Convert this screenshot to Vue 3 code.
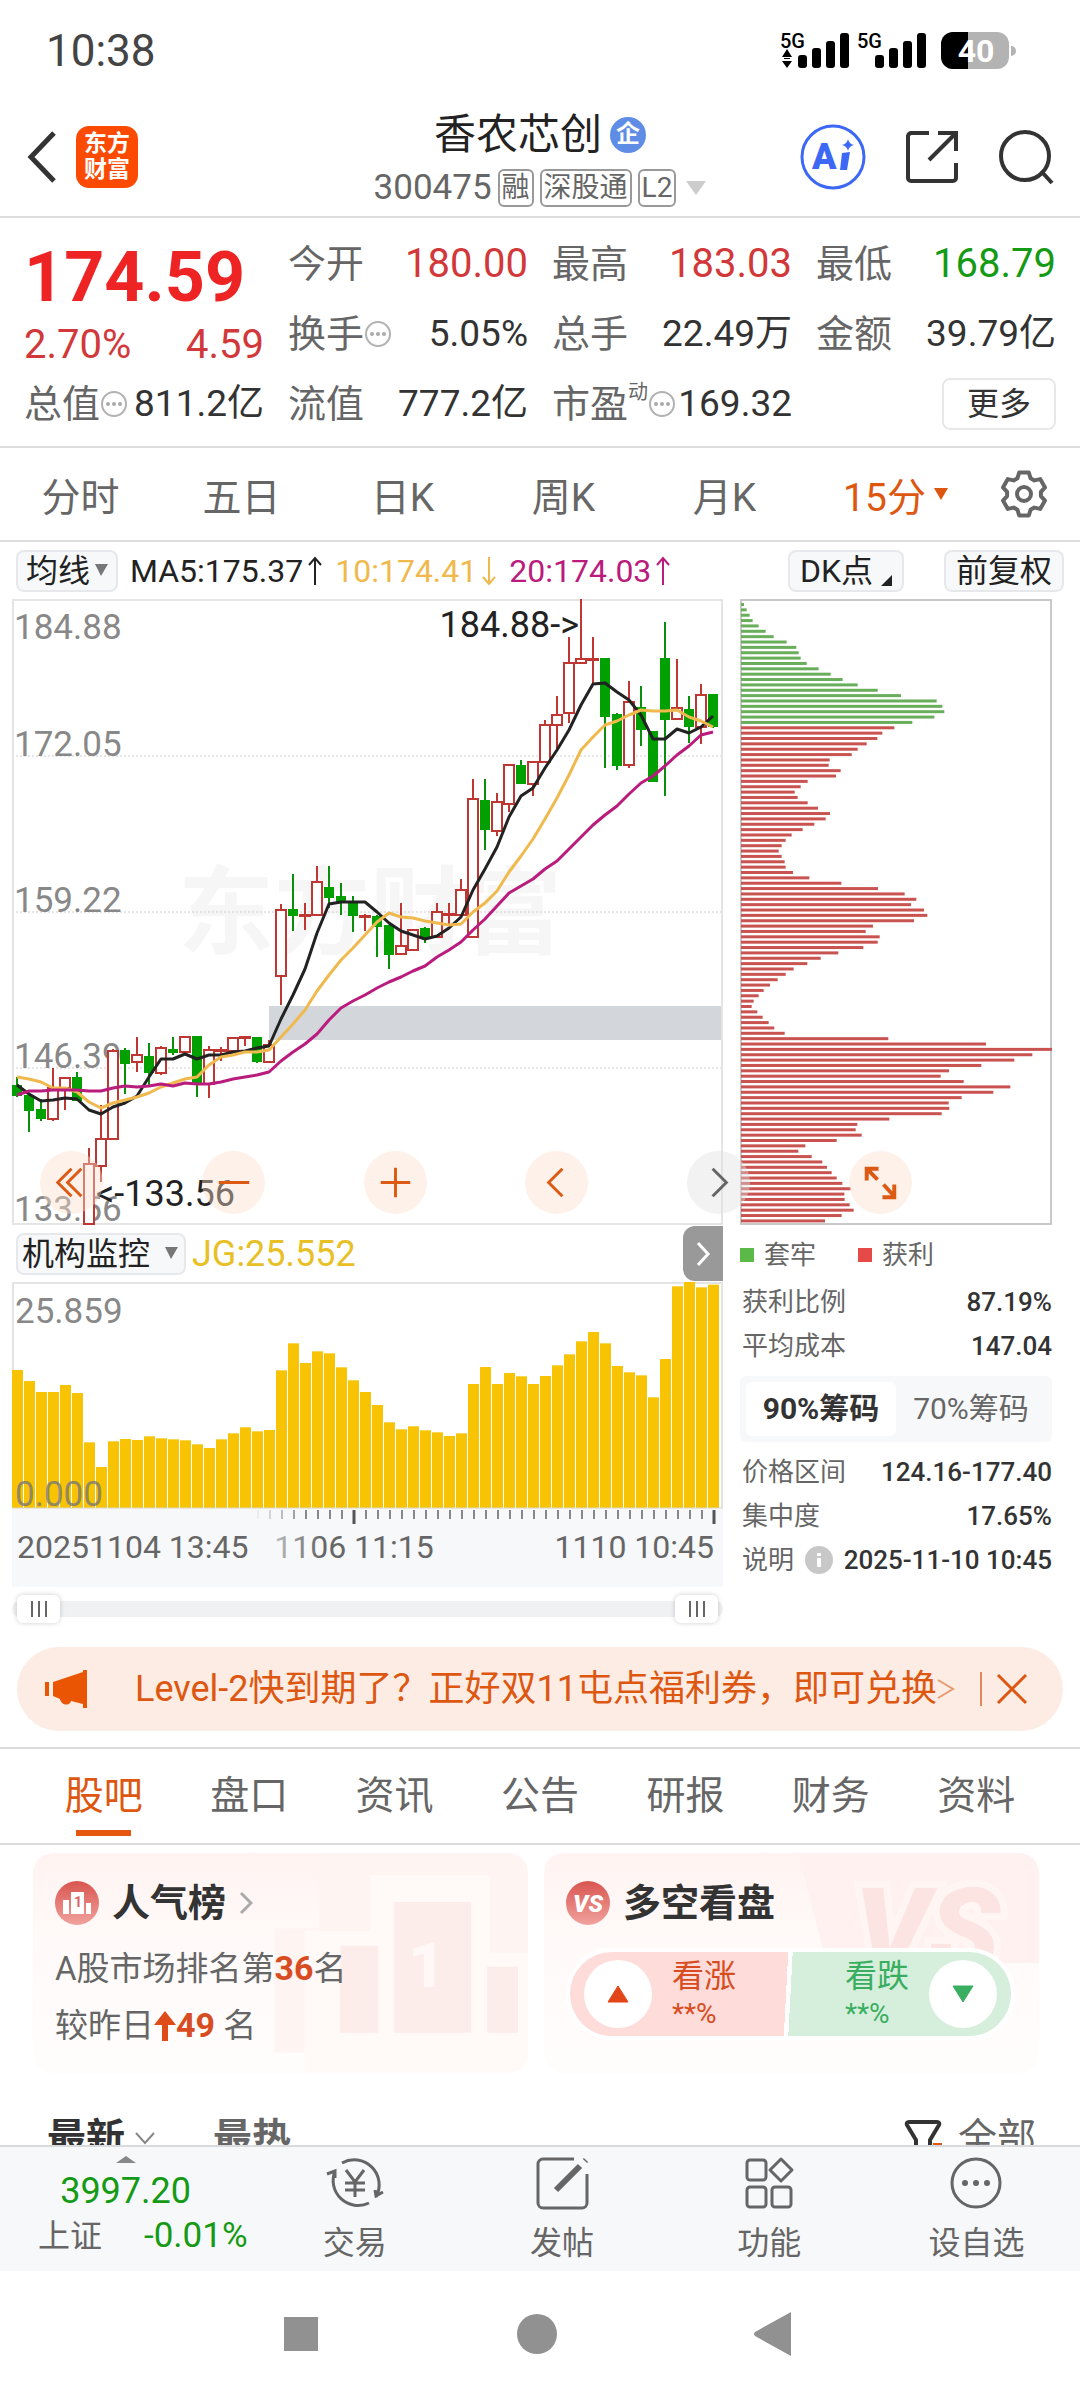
<script setup>
import { ref } from 'vue'

/* K-line samples: [direction, high, body top, body bottom, low].
   Heights are kept in plot units, 2.45 per pixel, starting at 23. */
const candles = [
  ['d', 1193, 1215, 1238, 1243], ['d', 1240, 1240, 1276, 1330], ['d', 1247, 1276, 1295, 1302],
  ['u', 1171, 1220, 1298, 1302], ['u', 1195, 1196, 1222, 1275], ['d', 1183, 1196, 1250, 1252],
  ['u', 1368, 1408, 1554, 1554], ['u', 1262, 1347, 1411, 1452], ['u', 1125, 1131, 1345, 1345],
  ['d', 1122, 1130, 1159, 1235], ['u', 1095, 1141, 1158, 1182], ['d', 1111, 1144, 1182, 1214],
  ['u', 1118, 1124, 1184, 1190], ['d', 1096, 1129, 1133, 1139], ['u', 1095, 1095, 1132, 1132],
  ['d', 1095, 1096, 1211, 1243], ['u', 1118, 1127, 1212, 1245], ['u', 1120, 1129, 1131, 1154],
  ['u', 1097, 1099, 1130, 1130], ['u', 1096, 1097, 1099, 1118], ['d', 1096, 1098, 1155, 1160],
  ['u', 1103, 1115, 1157, 1157], ['u', 770, 784, 946, 1018], ['d', 696, 784, 798, 836],
  ['u', 768, 797, 799, 835], ['u', 678, 716, 797, 797], ['d', 678, 731, 752, 780],
  ['d', 718, 753, 764, 797], ['d', 750, 765, 796, 839], ['u', 795, 800, 802, 837],
  ['d', 797, 801, 825, 900], ['d', 822, 824, 892, 930], ['u', 768, 872, 892, 892],
  ['u', 833, 835, 884, 884], ['d', 827, 832, 850, 866], ['u', 768, 790, 852, 852],
  ['u', 768, 795, 797, 820], ['u', 708, 735, 796, 796], ['u', 465, 513, 852, 852],
  ['d', 463, 519, 587, 638], ['u', 499, 520, 591, 604], ['u', 428, 429, 525, 546],
  ['d', 418, 431, 474, 477], ['u', 422, 423, 476, 506], ['u', 319, 331, 423, 423],
  ['u', 261, 307, 331, 390], ['u', 115, 181, 303, 328], ['u', 23, 170, 181, 181],
  ['u', 115, 171, 173, 230], ['d', 170, 171, 310, 438], ['d', 302, 306, 429, 442],
  ['u', 225, 275, 430, 438], ['d', 236, 291, 342, 382], ['d', 348, 349, 468, 468],
  ['d', 80, 171, 317, 505], ['u', 171, 291, 317, 320], ['d', 261, 295, 335, 376],
  ['u', 231, 259, 336, 378], ['d', 258, 259, 333, 340],
]
const ma5 = [1213, 1235, 1254, 1250, 1246, 1249, 1274, 1285, 1268, 1259, 1240, 1195, 1150, 1150, 1137, 1149, 1139, 1139, 1133, 1130, 1122, 1117, 1052, 992, 930, 842, 770, 765, 765, 766, 790, 817, 837, 847, 855, 848, 828, 801, 737, 684, 630, 558, 506, 487, 437, 394, 343, 283, 232, 228, 251, 271, 306, 365, 367, 341, 351, 336, 309]
const ma10 = [1194, 1199, 1207, 1220, 1222, 1232, 1255, 1269, 1259, 1251, 1243, 1233, 1218, 1209, 1199, 1193, 1165, 1144, 1139, 1134, 1134, 1128, 1097, 1064, 1031, 983, 945, 908, 878, 847, 815, 793, 801, 805, 811, 818, 822, 820, 790, 769, 738, 693, 653, 611, 561, 511, 453, 394, 361, 332, 323, 307, 295, 298, 297, 296, 311, 321, 336]
const ma20 = [1238, 1229, 1229, 1227, 1226, 1226, 1229, 1229, 1220, 1215, 1218, 1217, 1212, 1215, 1210, 1212, 1212, 1207, 1200, 1194, 1189, 1181, 1156, 1134, 1114, 1088, 1055, 1026, 1009, 992, 975, 961, 948, 934, 921, 900, 882, 863, 835, 808, 776, 743, 727, 708, 685, 664, 636, 605, 576, 552, 530, 501, 474, 456, 431, 405, 382, 357, 348]

const px = (i) => 5 + i * 12
const py = (v) => Math.round((v - 23) / 2.45)
const line = (values) => values.map((v, i) => `${px(i)},${py(v)}`).join(' ')

const axis = [['184.88', 40], ['172.05', 157], ['159.22', 313], ['146.39', 469], ['133.56', 622]]

/* Chip distribution, longest bar = 934 */
const trapped = [9, 17, 26, 35, 53, 74, 98, 137, 166, 173, 179, 197, 233, 269, 305, 350, 410, 480, 587, 604, 610, 580, 514]
const profit = [460, 424, 409, 377, 350, 332, 266, 263, 299, 285, 200, 179, 161, 170, 200, 231, 267, 254, 220, 185, 152, 134, 122, 113, 122, 131, 134, 156, 205, 301, 411, 491, 526, 510, 549, 559, 519, 396, 374, 416, 410, 367, 292, 239, 199, 158, 134, 110, 87, 68, 53, 38, 32, 49, 65, 83, 100, 131, 442, 735, 934, 874, 820, 721, 624, 599, 668, 808, 757, 662, 623, 625, 602, 445, 349, 344, 362, 287, 193, 172, 212, 244, 258, 272, 287, 304, 329, 310, 311, 326, 338, 302, 252]
const chips = [...trapped, ...profit].map((v, i) => ({
  y: 6 + i * 5.36,
  w: v / 3,
  color: i < trapped.length ? '#69ae5b' : '#c95350',
}))

/* Institution monitor, measured down from the top of the pane (678 = zero) */
const jg = [264, 297, 330, 330, 309, 333, 481, 555, 478, 471, 474, 463, 469, 472, 475, 487, 498, 472, 454, 436, 448, 444, 265, 184, 243, 208, 214, 256, 295, 330, 369, 421, 442, 433, 445, 451, 462, 454, 306, 255, 306, 273, 283, 306, 282, 250, 217, 178, 150, 184, 252, 271, 280, 346, 231, 13, 0, 16, 8]

const ticks = Array.from({ length: 39 }, (_, i) => ({
  x: 246 + i * 12,
  major: i === 8 || i === 38,
  opacity: Math.min(1, 0.1 + i * 0.22),
}))

const gear = (() => {
  const pts = []
  for (let i = 0; i < 6; i++) {
    const a = (i * 60 - 90) * Math.PI / 180
    for (const [r, d] of [[17, -0.4], [22, -0.22], [22, 0.22], [17, 0.4]]) {
      pts.push(`${(25 + r * Math.cos(a + d)).toFixed(1)},${(25 + r * Math.sin(a + d)).toFixed(1)}`)
    }
  }
  return pts.join(' ')
})()

const periods = ['分时', '五日', '日K', '周K', '月K']
const sections = ['股吧', '盘口', '资讯', '公告', '研报', '财务', '资料']
const quotes = [
  { k: '今开', v: '180.00', c: 'red' },
  { k: '最高', v: '183.03', c: 'red' },
  { k: '最低', v: '168.79', c: 'green' },
  { k: '换手', v: '5.05%', tip: true },
  { k: '总手', v: '22.49万' },
  { k: '金额', v: '39.79亿' },
  { k: '总值', v: '811.2亿', tip: true },
  { k: '流值', v: '777.2亿' },
  { k: '市盈', v: '169.32', tip: true, sup: '动' },
]
const rangeStart = ref(0)
const rangeEnd = ref(100)
</script>

<template>
  <div class="app">
    <div class="status">
      <span class="clock">10:38</span>
      <svg class="signals" width="240" height="44" viewBox="0 0 240 44" aria-label="5G 5G 40%">
        <g fill="#000">
          <text x="0" y="19" font-size="20" font-weight="500" class="sig">5G</text>
          <text x="77" y="19" font-size="20" font-weight="500" class="sig">5G</text>
          <path d="M2 28l5-8 5 8zM2 32l5 7 5-7zM4 29h6v1H4z" />
          <rect x="18" y="26" width="9" height="13" rx="3" /><rect x="32" y="19" width="9" height="20" rx="3" />
          <rect x="46" y="12" width="9" height="27" rx="3" /><rect x="60" y="4" width="9" height="35" rx="3" />
          <rect x="95" y="26" width="9" height="13" rx="3" /><rect x="109" y="19" width="9" height="20" rx="3" />
          <rect x="123" y="12" width="9" height="27" rx="3" /><rect x="137" y="4" width="9" height="35" rx="3" />
        </g>
        <rect x="161" y="3" width="68" height="37" rx="12" fill="#b3b3b3" />
        <path d="M188 3h-15a12 12 0 0 0-12 12v13a12 12 0 0 0 12 12h15z" fill="#000" />
        <path d="M231 17a5 5 0 0 1 0 10z" fill="#b3b3b3" />
        <text x="196" y="33" text-anchor="middle" font-size="32" font-weight="700" fill="#fff" class="sig">40</text>
      </svg>
    </div>

    <header class="top">
      <button class="back" aria-label="返回">
        <svg width="32" height="56" viewBox="0 0 32 56" fill="none" stroke="#333" stroke-width="5"><path d="M28 4L5 28l23 24" /></svg>
      </button>
      <a class="logo" href="#">东方<br>财富</a>
      <div class="name">
        <h1>香农芯创<span class="qi">企</span></h1>
        <button class="code">300475<span class="tag">融</span><span class="tag">深股通</span><span class="tag">L2</span>
          <svg width="20" height="14" viewBox="0 0 20 14"><path d="M0 0h20L10 14z" fill="#ccc" /></svg>
        </button>
      </div>
      <div class="actions">
        <button aria-label="Ai">
          <svg width="66" height="66" viewBox="0 0 66 66">
            <circle cx="33" cy="33" r="31" fill="#fff" stroke="#3d68f6" stroke-width="3" />
            <text x="12" y="45" font-size="36" font-weight="900" fill="#3d68f6" class="sig">A</text>
            <path d="M42 29l8-1-3 18h-7z" fill="#3d68f6" /><path d="M48 15q1 5 6 6-5 1-6 6-1-5-6-6 5-1 6-6z" fill="#3d68f6" />
          </svg>
        </button>
        <button aria-label="分享">
          <svg width="56" height="56" viewBox="0 0 56 56" fill="none" stroke="#333" stroke-width="4">
            <path d="M25 4H7a4 4 0 0 0-3 3v42a3 3 0 0 0 3 3h42a3 3 0 0 0 3-3V34M34 4h18v18M52 4L25 31" />
          </svg>
        </button>
        <button aria-label="搜索">
          <svg width="56" height="56" viewBox="0 0 56 56" fill="none" stroke="#333" stroke-width="4"><circle cx="27" cy="27" r="24" /><path d="M43 42l11 12" /></svg>
        </button>
      </div>
    </header>

    <section class="quote">
      <div class="last">
        <div class="price">174.59</div>
        <div class="change"><span>2.70%</span><span>4.59</span></div>
      </div>
      <div v-for="q in quotes" :key="q.k" class="cell">
        <span class="k">{{ q.k }}<sup v-if="q.sup">{{ q.sup }}</sup></span>
        <svg v-if="q.tip" class="tip" width="28" height="28" viewBox="0 0 28 28">
          <circle cx="14" cy="14" r="12" fill="none" stroke="#b2b2b2" stroke-width="2" />
          <g fill="#aaa"><circle cx="8" cy="14" r="2" /><circle cx="14" cy="14" r="2" /><circle cx="20" cy="14" r="2" /></g>
        </svg>
        <span class="v" :class="q.c">{{ q.v }}</span>
      </div>
      <div class="cell"><button class="more">更多</button></div>
    </section>

    <nav class="periods">
      <button v-for="p in periods" :key="p">{{ p }}</button>
      <button class="on">15分<svg width="14" height="14" viewBox="0 0 14 14"><path d="M0 1h14L7 13z" fill="#dd5711" /></svg></button>
      <button aria-label="设置">
        <svg width="50" height="50" viewBox="0 0 50 50" fill="none" stroke="#666" stroke-width="4" stroke-linejoin="round"><polygon :points="gear" /><circle cx="25" cy="25" r="7" /></svg>
      </button>
    </nav>

    <div class="indicators">
      <label class="pick">
        <select aria-label="主图指标"><option>均线</option></select>
        <svg width="13" height="13" viewBox="0 0 13 13"><path d="M0 0h13L6 12z" fill="#777" /></svg>
      </label>
      <span class="ma m5">MA5:175.37<svg width="16" height="30" viewBox="0 0 16 30"><path d="M8 29V2M2 9l6-7 6 7" /></svg></span>
      <span class="ma m10">10:174.41<svg width="16" height="30" viewBox="0 0 16 30"><path d="M8 1v27M2 21l6 7 6-7" /></svg></span>
      <span class="ma m20">20:174.03<svg width="16" height="30" viewBox="0 0 16 30"><path d="M8 29V2M2 9l6-7 6 7" /></svg></span>
      <button class="chipbtn dk">DK点<svg width="11" height="11" viewBox="0 0 11 11"><path d="M11 0v11H0z" fill="#222" /></svg></button>
      <button class="chipbtn">前复权</button>
    </div>

    <section class="charts">
      <svg class="kline" viewBox="0 0 711 626">
        <text x="358" y="347" text-anchor="middle" font-size="96" font-weight="700" fill="#f6f6f6">东方财富</text>
        <rect x="257" y="407" width="454" height="34" fill="#d3d7dc" />
        <g stroke="#ccc" stroke-dasharray="2 2"><path d="M0 157h711M0 313h711M0 469h711" /></g>
        <rect x="1" y="1" width="709" height="624" fill="none" stroke="#e4e4e4" stroke-width="2" />
        <g fill="#888" font-size="35"><text v-for="a in axis" :key="a[0]" x="2" :y="a[1]">{{ a[0] }}</text></g>
        <g v-for="(c, i) in candles" :key="i" stroke-width="2" :stroke="c[0] === 'u' ? '#bf3733' : '#0a8f0a'">
          <path :d="`M${px(i)} ${py(c[1])}V${py(c[2])}M${px(i)} ${py(c[3])}V${py(c[4])}`" />
          <rect :x="px(i) - (c[0] === 'u' ? 5 : 4)" :y="py(c[2])" :width="c[0] === 'u' ? 10 : 8" :height="Math.max(py(c[3]) - py(c[2]), 1)" :fill="c[0] === 'u' ? '#fff' : '#00a000'" :stroke="c[0] === 'u' ? '#bf3733' : '#00a000'" />
        </g>
        <g fill="none" stroke-width="3" stroke-linejoin="round">
          <polyline :points="line(ma5)" stroke="#222" />
          <polyline :points="line(ma10)" stroke="#f0b94e" />
          <polyline :points="line(ma20)" stroke="#b91c7c" />
        </g>
        <g fill="#222" font-size="36">
          <text x="567" y="38" text-anchor="end">184.88-&gt;</text>
          <text x="84" y="607">&lt;-133.56</text>
        </g>
      </svg>
      <svg class="pyramid" viewBox="0 0 312 626">
        <rect x="1" y="1" width="310" height="624" fill="none" stroke="#c9c9c9" stroke-width="2" />
        <rect v-for="(c, i) in chips" :key="i" x="1" :y="c.y - 2" :width="c.w" height="3" :fill="c.color" />
      </svg>
      <div class="controls">
        <button aria-label="最左"><svg viewBox="0 0 64 64"><path d="M32 18L18 32l14 14M42 18L28 32l14 14" /></svg></button>
        <button aria-label="缩小"><svg viewBox="0 0 64 64"><path d="M17 32h31" /></svg></button>
        <button aria-label="放大"><svg viewBox="0 0 64 64"><path d="M17 32h30M32 17v30" /></svg></button>
        <button aria-label="左移"><svg viewBox="0 0 64 64"><path d="M38 18L24 32l14 14" /></svg></button>
        <button aria-label="右移" class="off"><svg viewBox="0 0 64 64"><path d="M26 18l14 14-14 14" /></svg></button>
        <button aria-label="全屏"><svg viewBox="0 0 64 64" class="bold"><path d="M30 18H18v12M19 19l10 10M35 34l11 12M34 47h12V34" /></svg></button>
      </div>

      <div class="sub">
        <div class="subhead">
          <label class="pick">
            <select aria-label="副图指标"><option>机构监控</option></select>
            <svg width="13" height="13" viewBox="0 0 13 13"><path d="M0 0h13L6 12z" fill="#777" /></svg>
          </label>
          <span class="jg">JG:25.552</span>
          <button class="fold" aria-label="收起"><svg width="16" height="26" viewBox="0 0 16 26" fill="none" stroke="#fff" stroke-width="3"><path d="M3 2l10 11L3 24" /></svg></button>
        </div>
        <svg class="bars" viewBox="0 0 711 305">
          <rect y="226" width="711" height="79" fill="#f7f8fa" />
          <path d="M0 1h711M710 0v226M1 0v226" stroke="#e4e4e4" stroke-width="2" fill="none" />
          <rect v-for="(v, i) in jg" :key="i" :x="i * 12" :y="v / 3" width="11" :height="226 - v / 3" fill="#f7c302" />
          <path d="M0 226h711" stroke="#dcd6c0" />
          <g font-size="35"><text x="3" y="41" fill="#888">25.859</text><text x="3" y="224" fill="#777" fill-opacity=".8">0.000</text></g>
          <path v-for="t in ticks" :key="t.x" :d="`M${t.x} 228v${t.major ? 14 : 9}`" :stroke="t.major ? '#555' : '#888'" :stroke-width="t.major ? 3 : 2" :opacity="t.opacity" />
          <defs><linearGradient id="fade"><stop offset="0" stop-color="#666" stop-opacity=".4" /><stop offset=".3" stop-color="#666" /></linearGradient></defs>
          <g fill="#666" font-size="32"><text x="5" y="276">20251104 13:45</text><text x="342" y="276" text-anchor="middle" fill="url(#fade)">1106 11:15</text><text x="702" y="276" text-anchor="end">1110 10:45</text></g>
        </svg>
        <div class="slider">
          <input v-model="rangeStart" type="range" aria-label="开始时间">
          <input v-model="rangeEnd" type="range" aria-label="结束时间">
        </div>
      </div>

      <div class="stats">
        <div class="legend"><i class="g"></i>套牢<i class="r"></i>获利</div>
        <dl>
          <div><dt>获利比例</dt><dd>87.19%</dd></div>
          <div><dt>平均成本</dt><dd>147.04</dd></div>
        </dl>
        <div class="toggle"><button class="on">90%筹码</button><button>70%筹码</button></div>
        <dl>
          <div><dt>价格区间</dt><dd>124.16-177.40</dd></div>
          <div><dt>集中度</dt><dd>17.65%</dd></div>
          <div>
            <dt>说明
              <svg width="28" height="28" viewBox="0 0 28 28"><circle cx="14" cy="14" r="14" fill="#c8c8c8" /><path d="M12 7h4v3h-4zM12 12h4v9h-4z" fill="#fff" /></svg>
            </dt>
            <dd>2025-11-10 10:45</dd>
          </div>
        </dl>
      </div>
    </section>

    <div class="banner">
      <svg width="42" height="38" viewBox="0 0 42 38" fill="#ea5504"><path d="M0 12h4v14H0zM8 12L38 2V0h4v38h-4v-4l-12-3c-2 6-10 4-11-2l-7-3z" /></svg>
      <a href="#">Level-2快到期了？正好双11屯点福利券，即可兑换</a>
      <svg width="18" height="22" viewBox="0 0 18 22" fill="none" stroke="#e89a70" stroke-width="2"><path d="M1 2l15 9L1 20" /></svg>
      <i></i>
      <button aria-label="关闭"><svg width="32" height="32" viewBox="0 0 32 32" fill="none" stroke="#dd5711" stroke-width="3"><path d="M2 2l28 28M30 2L2 30" /></svg></button>
    </div>

    <nav class="sections">
      <button v-for="(s, i) in sections" :key="s" :class="{ on: i === 0 }">{{ s }}</button>
    </nav>

    <section class="cards">
      <article class="card">
        <svg class="deco" viewBox="0 0 496 220" aria-hidden="true">
          <path d="M287 0h189a20 20 0 0 1 20 20v180H242V76h45z" fill="#fef4f2" />
          <path d="M338 22h120v78h38v120H272V78h66z" fill="#fff9f8" />
          <path d="M362 49h77v131h-77zM308 93h38v87h-38zM455 114h31v66h-31z" fill="#fcecea" />
          <text x="376" y="134" font-size="64" font-weight="900" fill="#fff8f6">1</text>
        </svg>
        <h2>
          <svg width="44" height="44" viewBox="0 0 44 44">
            <defs><linearGradient id="badge" x2="0" y2="1"><stop offset="0" stop-color="#d95550" /><stop offset="1" stop-color="#f0a29d" /></linearGradient></defs>
            <circle cx="22" cy="22" r="22" fill="url(#badge)" /><path d="M8 19h6v14H8zM16 11h13v22H16zM31 22h5v11h-5z" fill="#fff" />
            <text x="19" y="26" font-size="14" font-weight="700" fill="#dc6560">1</text>
          </svg>
          人气榜
          <svg width="14" height="24" viewBox="0 0 14 24" fill="none" stroke="#aaa" stroke-width="3"><path d="M2 2l10 10L2 22" /></svg>
        </h2>
        <p>A股市场排名第<b>36</b>名</p>
        <p>较昨日<svg width="22" height="30" viewBox="0 0 22 30" fill="#e04b1a"><path d="M11 0l11 14h-8v16H8V14H0z" /></svg><b>49</b> 名</p>
      </article>
      <article class="card">
        <svg class="deco" viewBox="0 0 494 220" aria-hidden="true">
          <path d="M254 0h220a20 20 0 0 1 20 20v90H282z" fill="#fef1ef" />
          <text x="310" y="118" font-size="116" font-weight="900" font-style="italic" fill="#fbe4e1" stroke="#fff6f4" stroke-width="14" paint-order="stroke">VS</text>
        </svg>
        <h2>
          <svg width="44" height="44" viewBox="0 0 44 44"><circle cx="22" cy="22" r="22" fill="url(#badge)" /><text x="22" y="31" text-anchor="middle" font-size="24" font-weight="900" font-style="italic" fill="#fff">VS</text></svg>
          多空看盘
        </h2>
        <div class="vote">
          <button class="up"><span class="disc"><svg width="22" height="18" viewBox="0 0 22 18"><path d="M11 1l10 16H1z" fill="#e24518" stroke="#e24518" stroke-linejoin="round" /></svg></span><span class="lab">看涨<small>**%</small></span></button>
          <button class="down"><span class="lab">看跌<small>**%</small></span><span class="disc"><svg width="22" height="18" viewBox="0 0 22 18"><path d="M1 1h20L11 17z" fill="#3aae60" stroke="#3aae60" stroke-linejoin="round" /></svg></span></button>
        </div>
      </article>
    </section>

    <div class="feed">
      <button class="newest">最新<svg width="20" height="14" viewBox="0 0 20 14" fill="none" stroke="#888" stroke-width="2"><path d="M1 2l9 10 9-10" /></svg></button>
      <button class="hot">最热</button>
      <button class="all"><svg width="40" height="36" viewBox="0 0 40 36" fill="none" stroke="#333" stroke-width="4"><path d="M12 36V20L3 5q-1-3 2-3h28q3 0 2 3l-9 15v16" /><path d="M29 23h9v8h-9z" fill="#dd5711" stroke="none" /></svg>全部</button>
    </div>

    <nav class="dock">
      <a href="#" class="index">
        <svg width="20" height="7" viewBox="0 0 20 7"><path d="M10 0l10 7H0z" fill="#888" /></svg>
        <strong>3997.20</strong>
        <span>上证<em>-0.01%</em></span>
      </a>
      <a href="#"><svg viewBox="0 0 60 54"><path d="M17 7a25 25 0 0 1 34 34M44 47A25 25 0 0 1 10 15M2 18l8-3v7M50 34l1 6 7-4" /><path d="M21 14l9 12 9-12M30 26v15M20 27h20M20 34h20" /></svg>交易</a>
      <a href="#"><svg viewBox="0 0 60 54"><path d="M42 3H11a5 5 0 0 0-5 5v39a5 5 0 0 0 5 5h39a5 5 0 0 0 5-5V18" /><path d="M24 34l24-24M53 5l1-1" stroke-width="6" /></svg>发帖</a>
      <a href="#"><svg viewBox="0 0 60 54"><rect x="8" y="4" width="19" height="20" rx="3" /><rect x="8" y="31" width="19" height="20" rx="3" /><rect x="33" y="31" width="19" height="20" rx="3" /><path d="M42 3l11 11-11 11-11-11z" stroke-linejoin="round" /></svg>功能</a>
      <a href="#"><svg viewBox="0 0 60 54"><circle cx="30" cy="27" r="24" /><g fill="#666" stroke="none"><circle cx="19" cy="27" r="3" /><circle cx="30" cy="27" r="3" /><circle cx="41" cy="27" r="3" /></g></svg>设自选</a>
    </nav>

    <div class="sysnav">
      <button aria-label="最近任务"><svg width="40" height="44" viewBox="0 0 40 44"><path d="M3 5h34v34H3z" /></svg></button>
      <button aria-label="主页"><svg width="40" height="44" viewBox="0 0 40 44"><circle cx="20" cy="22" r="20" /></svg></button>
      <button aria-label="返回"><svg width="40" height="44" viewBox="0 0 40 44"><path d="M38 0v44L2 24q-2-2 0-4z" /></svg></button>
    </div>
  </div>
</template>

<style>
body { margin: 0; background: #fff; }
</style>

<style scoped>
.app { font-family: Roboto, "Noto Sans CJK SC", sans-serif; color: #333; background: #fff; }
.app * { box-sizing: border-box; }
button, select { font: inherit; color: inherit; background: none; border: 0; padding: 0; margin: 0; }
select { appearance: none; }
a { color: inherit; text-decoration: none; }
h1, h2, p, dl, dd { margin: 0; font-weight: 400; }
svg { display: block; flex: none; }
.sig { font-family: Roboto, sans-serif; }
.red { color: #d2383a; }
.green { color: #159a15; }

.status { display: flex; justify-content: space-between; align-items: center; height: 100px; padding: 2px 60px 0 46px; }
.clock { font-size: 44px; line-height: 52px; color: #444; }

.top { display: grid; grid-template-columns: 1fr auto 1fr; align-items: center; height: 118px; border-bottom: 2px solid #dcdcdc; padding: 0 26px 2px; grid-template-areas: "left mid right"; }
.back { grid-area: left; justify-self: start; }
.logo { grid-area: left; margin-left: 50px; width: 62px; height: 62px; border-radius: 13px; background: #fd4a02; color: #fff; font-size: 23px; line-height: 26px; font-weight: 700; text-align: center; padding-top: 5px; }
.name { grid-area: mid; display: flex; flex-direction: column; align-items: center; gap: 6px; }
h1 { display: flex; align-items: center; gap: 8px; font-size: 42px; line-height: 56px; color: #222; }
.qi { width: 36px; height: 36px; border-radius: 50%; background: #5f8de6; color: #fff; font-size: 24px; line-height: 35px; text-align: center; font-weight: 700; }
.code { display: flex; align-items: center; gap: 6px; font-size: 35px; line-height: 38px; color: #666; white-space: nowrap; }
.tag { border: 2px solid #999; border-radius: 6px; font-size: 28px; line-height: 34px; padding: 0 2px; }
.code svg { margin-left: 4px; }
.actions { grid-area: right; display: flex; justify-content: flex-end; align-items: center; gap: 38px; }

.quote { display: grid; grid-template-columns: repeat(4, 1fr); grid-auto-rows: 70px; column-gap: 24px; padding: 11px 24px 7px; border-bottom: 2px solid #dcdcdc; }
.last { grid-row: span 2; }
.price { font-size: 70px; line-height: 96px; font-weight: 700; color: #ee2424; }
.change { display: flex; justify-content: space-between; font-size: 40px; line-height: 40px; color: #d2383a; }
.cell { display: flex; align-items: center; font-size: 38px; line-height: 48px; white-space: nowrap; }
.cell .k { color: #666; position: relative; }
.cell sup { font-size: 20px; line-height: 20px; vertical-align: 18px; }
.cell .v { margin-left: auto; font-size: 37px; }
.cell .v.red, .cell .v.green { font-size: 40px; }
.more { margin-left: auto; width: 114px; height: 52px; border: 2px solid #e8e8ea; border-radius: 8px; font-size: 32px; line-height: 44px; }

.periods { display: grid; grid-template-columns: repeat(5, 161fr) 181fr 76fr; height: 94px; padding-right: 18px; border-bottom: 2px solid #dcdcdc; font-size: 39px; color: #666; }
.periods button { display: flex; align-items: center; justify-content: center; gap: 8px; }
.periods .on { color: #dd5711; }

.indicators { display: flex; align-items: center; height: 57px; padding: 0 16px; font-size: 32px; line-height: 38px; color: #222; white-space: nowrap; }
.pick, .chipbtn { display: flex; align-items: center; gap: 4px; height: 42px; border: 2px solid #e6e8ec; border-radius: 8px; background: #f7f8fa; padding: 0 8px; color: #222; font-size: 32px; line-height: 38px; }
.chipbtn { padding: 0 10px; }
.ma { display: flex; align-items: center; gap: 4px; margin-left: 12px; }
.ma svg { fill: none; stroke: currentColor; stroke-width: 2; }
.m10 { color: #f0b94e; }
.m20 { color: #b91c7c; }
.dk { margin-left: auto; margin-right: 40px; gap: 8px; }
.dk svg { align-self: flex-end; margin-bottom: 4px; }

.charts { display: grid; grid-template-columns: 711fr 312fr; column-gap: 17px; padding: 0 28px 0 12px; }
.kline { grid-area: 1 / 1; width: 100%; }
.pyramid { grid-area: 1 / 2; width: 100%; }
.controls { grid-area: 1 / 1 / 2 / 3; align-self: end; display: flex; justify-content: space-between; padding: 0 140px 11px 28px; }
.controls button { width: 63px; height: 63px; border-radius: 50%; background: rgba(253, 221, 203, .42); }
.controls svg { width: 63px; height: 63px; fill: none; stroke: #dc5a14; stroke-width: 3; }
.controls .bold { stroke-width: 4; }
.controls .off { background: rgba(225, 225, 225, .42); }
.controls .off svg { stroke: #666; }

.sub { grid-area: 2 / 1; min-width: 0; }
.subhead { display: flex; align-items: center; height: 57px; padding-left: 4px; }
.subhead .pick { gap: 14px; padding: 0 6px 0 4px; }
.jg { font-size: 36px; line-height: 42px; color: #e8c026; margin-left: 6px; }
.fold { margin-left: auto; width: 40px; height: 55px; background: #999; border-radius: 12px 0 0 12px; display: flex; align-items: center; justify-content: center; }
.bars { width: 100%; }
.slider { display: grid; margin-top: 14px; height: 16px; align-items: center; border-radius: 8px; background: #f0f1f3; padding: 0 5px; }
.slider input { grid-area: 1 / 1; appearance: none; width: 100%; height: 0; margin: 0; background: none; }
.slider input::-webkit-slider-thumb { appearance: none; width: 43px; height: 28px; border-radius: 6px; background: linear-gradient(#666, #666) 14px 6px / 2px 16px no-repeat, linear-gradient(#666, #666) 21px 6px / 2px 16px no-repeat, linear-gradient(#666, #666) 28px 6px / 2px 16px no-repeat, #fff; box-shadow: 0 0 5px rgba(0, 0, 0, .2); }

.stats { grid-area: 2 / 2; min-width: 0; color: #666; font-size: 26px; line-height: 44px; }
.legend { display: flex; align-items: center; height: 55px; padding-top: 4px; }
.legend i { width: 14px; height: 14px; margin-right: 10px; }
.legend .g { background: #5ab947; }
.legend .r { background: #e64a48; margin-left: 42px; }
.stats dl div { display: flex; justify-content: space-between; align-items: center; height: 44px; padding-left: 2px; white-space: nowrap; }
.stats dt { display: flex; align-items: center; gap: 11px; }
.stats dd { color: #333; font-weight: 500; }
.toggle { display: grid; grid-template-columns: 150fr 150fr; margin: 8px 0; padding: 6px; height: 66px; border-radius: 6px; background: #f7f8fa; font-size: 30px; line-height: 54px; }
.toggle .on { background: #fff; border-radius: 6px; color: #333; font-weight: 700; }

.banner { display: flex; align-items: center; height: 84px; margin: 30px 17px 16px; padding: 0 35px 0 28px; border-radius: 42px; background: #fcece3; color: #dd5711; font-size: 36px; line-height: 44px; white-space: nowrap; }
.banner a { margin-left: 48px; }
.banner i { width: 2px; height: 34px; background: #e3885a; margin-left: auto; margin-right: 14px; }

.sections { display: grid; grid-template-columns: repeat(7, 1fr); height: 98px; padding: 0 31px; border-top: 2px solid #dcdcdc; border-bottom: 2px solid #dcdcdc; font-size: 39px; line-height: 94px; color: #666; }
.sections .on { color: #dd5711; background: linear-gradient(#e5560f, #e5560f) center bottom 7px / 55px 6px no-repeat; }

.cards { display: grid; grid-template-columns: 1fr 1fr; gap: 16px; padding: 8px 41px 0 33px; }
.card { display: flow-root; position: relative; height: 220px; border-radius: 20px; background: linear-gradient(#fff3f1, #fffaf9 40%, #fffdfc); overflow: hidden; padding: 22px 22px 0; }
.deco { position: absolute; top: 0; left: 0; width: 100%; }
.card > :not(.deco) { position: relative; }
h2 { display: flex; align-items: center; gap: 13px; font-size: 38px; line-height: 56px; font-weight: 700; }
.card p { display: flex; align-items: center; font-size: 33px; line-height: 57px; color: #666; white-space: pre; }
h2 + p { margin-top: 9px; }
.card b { color: #d84c22; font-weight: 700; font-size: 34px; }
.vote { display: flex; margin: 17px 0 0; width: 449px; height: 92px; border: 4px solid #fff; border-radius: 46px; overflow: hidden; background: linear-gradient(93deg, #fddcd9 49%, #fff 49% 50%, #d5efdc 50%); }
.vote button { flex: 1; display: flex; align-items: center; gap: 20px; padding: 0 14px; text-align: left; font-size: 32px; line-height: 40px; }
.vote .up { color: #d84c22; }
.vote .down { color: #3aae60; justify-content: flex-end; }
.vote small { display: block; font-size: 28px; line-height: 36px; }
.disc { width: 68px; height: 68px; border-radius: 50%; background: #fff; display: flex; align-items: center; justify-content: center; }

.feed { display: flex; align-items: flex-start; height: 72px; overflow: hidden; padding: 44px 44px 0 47px; font-size: 39px; line-height: 42px; white-space: nowrap; }
.feed button { display: flex; align-items: center; }
.newest { font-weight: 700; gap: 10px; }
.hot { font-weight: 700; color: #666; margin-left: 58px; }
.feed .all { margin-left: auto; gap: 14px; color: #666; }

.dock { display: grid; grid-template-columns: 251fr repeat(4, 207fr); height: 126px; background: #f7f8fa; border-top: 2px solid #d8dadd; font-size: 32px; line-height: 40px; color: #666; }
.dock a { display: flex; flex-direction: column; align-items: center; padding-top: 9px; }
.dock a:not(.index) svg { width: 60px; height: 54px; margin-bottom: 13px; fill: none; stroke: #666; stroke-width: 3; }
.dock strong { font-weight: 400; font-size: 36px; line-height: 50px; margin-top: 3px; color: #159a15; }
.dock span { display: flex; gap: 42px; padding-left: 38px; align-self: flex-start; }
.dock em { font-style: normal; font-size: 35px; color: #159a15; }

.sysnav { display: flex; justify-content: center; gap: 196px; height: 129px; padding-top: 41px; padding-right: 6px; }
.sysnav svg { fill: #919191; }
.sysnav button { height: 44px; }
</style>
